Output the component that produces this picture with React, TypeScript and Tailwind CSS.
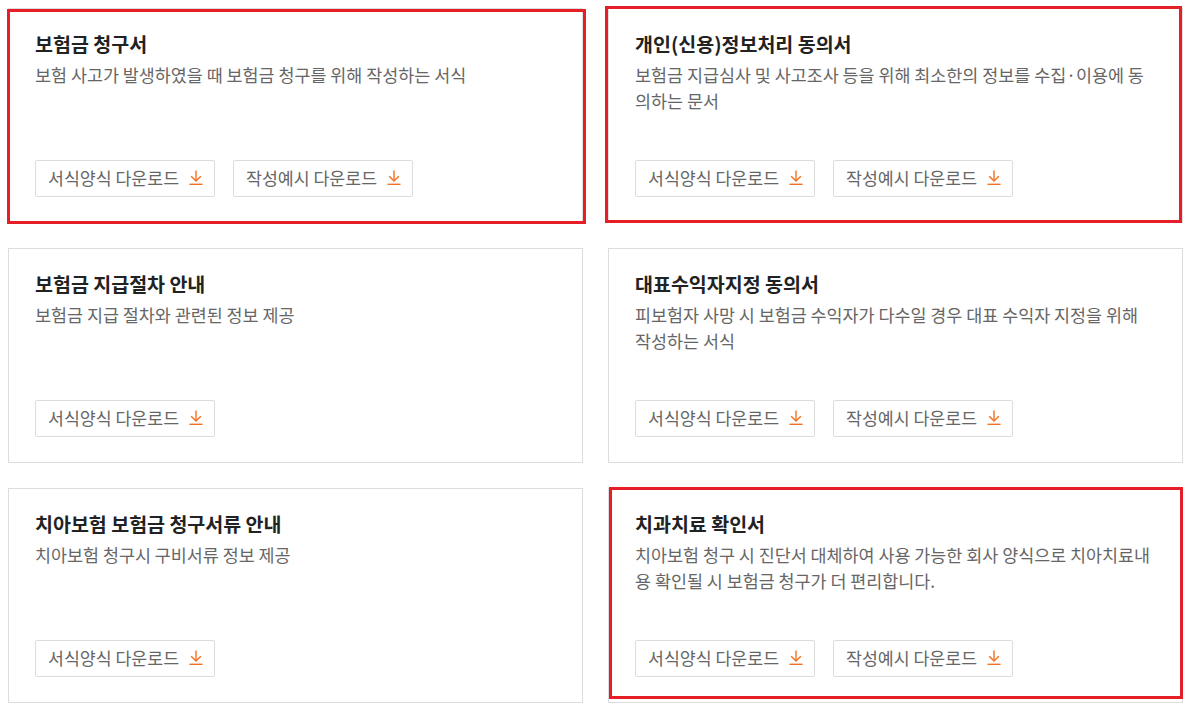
import React from "react";

type Card = {
  title: string;
  desc: string;
  example: boolean;
  red?: string;
};

const cards: Card[] = [
  {
    title: "보험금 청구서",
    desc: "보험 사고가 발생하였을 때 보험금 청구를 위해 작성하는 서식",
    example: true,
    red: "left-[-2px] top-0 right-[-4px] bottom-[-2px]",
  },
  {
    title: "개인(신용)정보처리 동의서",
    desc: "보험금 지급심사 및 사고조사 등을 위해 최소한의 정보를 수집·이용에 동의하는 문서",
    example: true,
    red: "left-[-4px] top-[-3px] right-0 bottom-[-1px]",
  },
  {
    title: "보험금 지급절차 안내",
    desc: "보험금 지급 절차와 관련된 정보 제공",
    example: false,
  },
  {
    title: "대표수익자지정 동의서",
    desc: "피보험자 사망 시 보험금 수익자가 다수일 경우 대표 수익자 지정을 위해 작성하는 서식",
    example: true,
  },
  {
    title: "치아보험 보험금 청구서류 안내",
    desc: "치아보험 청구시 구비서류 정보 제공",
    example: false,
  },
  {
    title: "치과치료 확인서",
    desc: "치아보험 청구 시 진단서 대체하여 사용 가능한 회사 양식으로 치아치료내용 확인될 시 보험금 청구가 더 편리합니다.",
    example: true,
    red: "left-0 top-[-2px] right-[-1px] bottom-[3px]",
  },
];

function DownloadIcon() {
  return (
    <svg width="16" height="17" viewBox="0 0 16 17" fill="none" className="shrink-0">
      <path d="M8 1.5V12" stroke="#f26f21" strokeWidth="1.4" />
      <path d="M3.2 7.3L8 12.1L12.8 7.3" stroke="#f26f21" strokeWidth="1.4" />
      <path d="M1.5 15.3H14.5" stroke="#f26f21" strokeWidth="1.4" />
    </svg>
  );
}

function DLButton({ label }: { label: string }) {
  return (
    <button className="flex h-[37px] w-[180px] items-center justify-start gap-[9px] rounded-[2px] border border-[#dcdcdc] bg-white pb-[2px] pl-[12px] text-[17.3px] leading-none text-[#666]">
      <span>{label}</span>
      <DownloadIcon />
    </button>
  );
}

function CardBox({ card }: { card: Card }) {
  return (
    <div className="relative flex h-[215px] flex-col border border-[#dddddd] bg-white px-[26px] pt-[22px] pb-[25px]">
      <h3 className="text-[19.5px] font-bold leading-[26px] text-[#222]">{card.title}</h3>
      <p className="mt-[5px] break-all text-[17.4px] leading-[26px] text-[#666]">{card.desc}</p>
      <div className="mt-auto flex gap-[18px]">
        <DLButton label="서식양식 다운로드" />
        {card.example && <DLButton label="작성예시 다운로드" />}
      </div>
      {card.red && (
        <div className={`pointer-events-none absolute border-[3px] border-[#e61e27] ${card.red}`} />
      )}
    </div>
  );
}

export default function App() {
  return (
    <div
      className="min-h-[708px] w-[1193px] bg-white pt-[8px] pl-[8px] pr-[10px]"
      style={{ fontFamily: '"Noto Sans CJK KR", "Noto Sans", sans-serif' }}
    >
      <div className="grid grid-cols-2 gap-x-[25px] gap-y-[25px]">
        {cards.map((c, i) => (
          <CardBox key={i} card={c} />
        ))}
      </div>
    </div>
  );
}
